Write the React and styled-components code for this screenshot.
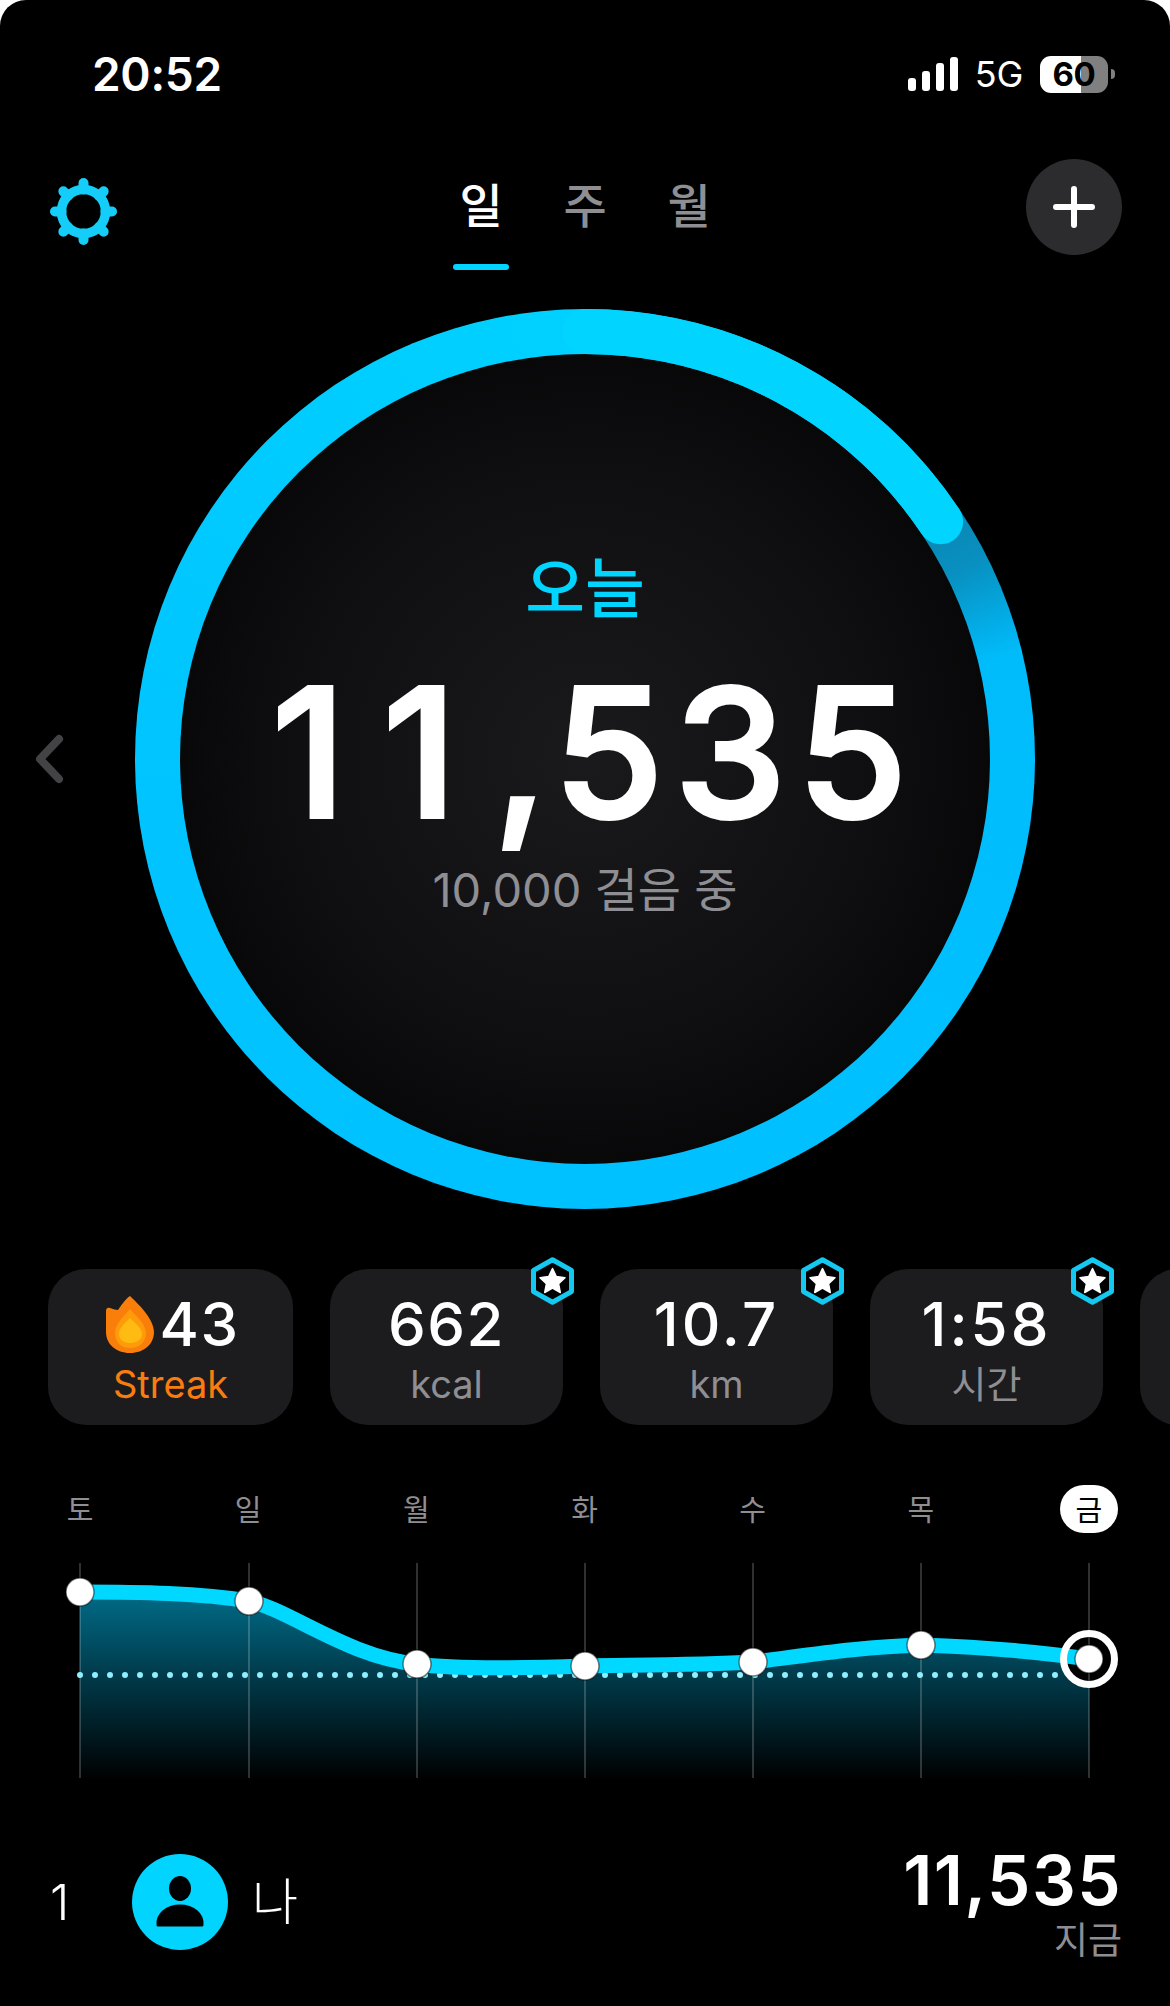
import React from 'react';
import styled, { createGlobalStyle } from 'styled-components';

const Global = createGlobalStyle`
  html, body { margin: 0; padding: 0; background: #fff; }
  * { box-sizing: border-box; }
`;

const SANS = `Inter, "Noto Sans CJK KR", "Noto Sans", sans-serif`;
const CYAN = '#00d4ff';
const GREY = '#8e8e93';

const Screen = styled.div`
  width: 1170px; height: 2006px; background: #000; color: #fff;
  border-radius: 26px 26px 0 0; overflow: hidden;
  font-family: ${SANS}; display: flex; flex-direction: column;
`;
const StatusBar = styled.div`
  height: 148px; flex: none; display: flex; align-items: center; justify-content: space-between;
  padding: 0 55px 0 92px;
`;
const Time = styled.div`font-size: 46px; font-weight: 600; line-height: 50px; letter-spacing: -0.3px;`;
const StatusRight = styled.div`display: flex; align-items: center;`;
const Signal = styled.div`display: flex; align-items: flex-end; gap: 6px; height: 34px; margin-right: 17px;`;
const SignalBar = styled.span`width: 8px; height: ${p => p.$h}px; border-radius: 3px; background: #fff;`;
const Network = styled.div`font-size: 36px; font-weight: 400; line-height: 38px; margin-right: 17px; letter-spacing: -0.3px;`;
const Battery = styled.div`
  width: 68px; height: 37px; border-radius: 11px; color: #000; font-size: 33px; font-weight: 700;
  background: linear-gradient(90deg, #fff 0 41px, #808080 41px 100%);
  display: flex; align-items: center; justify-content: center; line-height: 37px; letter-spacing: -0.3px;
`;
const BatteryNub = styled.span`
  width: 4px; height: 10px; margin-left: 3px; background: #808080; border-radius: 0 5px 5px 0;
`;

const Header = styled.div`
  flex: none; margin-top: 11px; padding: 0 48px; display: grid; grid-template-columns: 1fr auto 1fr;
  align-items: start;
`;
const GearBtn = styled.div`margin: 19px 0 0 2px; width: 67px; height: 67px;`;
const Tabs = styled.div`display: flex;`;
const Tab = styled.div`
  width: 104px; display: flex; flex-direction: column; align-items: center; padding-top: 15px;
`;
const TabLabel = styled.div`
  font-size: 47px; line-height: 64px; font-weight: 500; color: ${p => (p.$active ? '#fff' : GREY)};
`;
const TabBar = styled.div`
  width: 56px; height: 6px; margin-top: 26px; border-radius: 3px; background: ${p => (p.$active ? CYAN : 'transparent')};
`;
const AddBtn = styled.div`
  justify-self: end; width: 96px; height: 96px; border-radius: 50%; background: #2c2c2e;
  display: flex; align-items: center; justify-content: center;
`;

const RingArea = styled.div`position: relative; flex: none; margin-top: 39px; display: flex; justify-content: center;`;
const Chevron = styled.svg`position: absolute; left: 30px; top: 425px;`;
const Ring = styled.div`
  position: relative; width: 900px; height: 900px; border-radius: 50%; padding: 45px; display: flex;
  background: conic-gradient(from 56.3deg, #0a88b4 0deg, #0890c0 7deg, #04a8e0 14deg, #00bcfb 20deg, #00bfff 60deg, #00c4ff 210deg, #00d0ff 290deg, #00d4ff 360deg);
`;
const RingCap = styled.svg`position: absolute; left: 0; top: 0; pointer-events: none;`;
const Disc = styled.div`
  position: relative; flex: 1; border-radius: 50%;
  background: radial-gradient(circle, #1a1a1c 0%, #0f0f11 50%, #040405 82%, #000 100%);
  display: flex; flex-direction: column; align-items: center; padding-top: 200px;
`;
const TodayLabel = styled.div`font-size: 65px; line-height: 70px; font-weight: 500; color: ${CYAN};`;
const BigNumber = styled.div`
  margin-top: 34px; padding-left: 20px; font-size: 178px; line-height: 190px; font-weight: 500; white-space: pre;
  -webkit-text-stroke: 4px #fff;
`;
const BigPart = styled.span`letter-spacing: ${p => p.$ls}px;`;
const GoalText = styled.div`margin-top: 7px; font-size: 47px; line-height: 70px; font-weight: 400; color: ${GREY};`;

const Cards = styled.div`flex: none; margin-top: 60px; padding-left: 48px; display: flex; gap: 37px;`;
const Card = styled.div`
  position: relative; flex: none; width: ${p => p.$w}px; height: 156px; border-radius: 38px; background: #1c1c1e;
  display: flex; flex-direction: column; align-items: center; padding-top: 20px;
`;
const CardValueRow = styled.div`display: flex; align-items: center; gap: 6px; padding-left: 4px;`;
const CardValue = styled.div`font-size: 60px; line-height: 70px; font-weight: 500; letter-spacing: ${p => p.$ls || 1.5}px;`;
const CardLabel = styled.div`
  font-size: 38px; line-height: 46px; margin-top: 2px; font-weight: 400; color: ${p => p.$color || GREY};
`;
const BadgeSlot = styled.div`position: absolute; right: -12px; top: -12px; width: 45px; height: 48px;`;

const DayRow = styled.div`
  flex: none; margin-top: 60px; padding: 0 52px 0 51px; display: flex; justify-content: space-between;
`;
const Day = styled.div`
  width: 58px; height: 48px; border-radius: 24px; display: flex; align-items: center; justify-content: center;
  font-size: 29px; font-weight: 400; padding-bottom: 2px;
  color: ${p => (p.$active ? '#000' : GREY)}; background: ${p => (p.$active ? '#fff' : 'transparent')};
`;
const Chart = styled.svg`display: block; flex: none;`;

const RankRow = styled.div`
  flex: none; height: 204px; padding: 0 48px 0 50px; display: flex; align-items: center;
`;
const Rank = styled.div`width: 82px; font-size: 49px; font-weight: 300;`;
const Avatar = styled.div`
  width: 96px; height: 96px; border-radius: 50%; background: ${CYAN}; display: flex; align-items: center; justify-content: center;
`;
const Name = styled.div`margin-left: 24px; font-size: 50px; font-weight: 300; line-height: 60px;`;
const Score = styled.div`margin-left: auto; display: flex; flex-direction: column; align-items: flex-end;`;
const ScoreValue = styled.div`font-size: 69px; line-height: 78px; font-weight: 600; letter-spacing: 1.4px;`;
const ScoreLabel = styled.div`font-size: 37px; line-height: 44px; color: ${GREY}; font-weight: 400;`;

const Gear = () => {
  const teeth = [0, 45, 90, 135, 180, 225, 270, 315];
  return (
    <svg width="67" height="67" viewBox="-33.5 -33.5 67 67">
      {teeth.map(a => (
        <line key={a} x1="0" y1="-22" x2="0" y2="-28.5" stroke="#14cdf8" strokeWidth="10" strokeLinecap="round" transform={`rotate(${a})`} />
      ))}
      <circle r="22" fill="none" stroke="#14cdf8" strokeWidth="9.5" />
    </svg>
  );
};

const Flame = () => (
  <svg width="48" height="57" viewBox="0 0 48 57">
    <path d="M24 0C30 6 48 22 48 36C48 48 38 57 24 57C10 57 0 48 0 36L0 15C0 12 2 11 4 12C7 13 10 14 12 14C15 10 19 3 24 0Z" fill="#f97f0a" />
    <path d="M24 13C30 20 40 28 40 37C40 46 33 52 24 52C15 52 9 46 9 37C9 28 18 20 24 13Z" fill="#ff9a0a" />
    <path d="M24 22C29 27 36 32 36 38C36 44 30 47 24 47C18 47 13 44 13 38C13 32 19 27 24 22Z" fill="#ffbb12" />
  </svg>
);

const StarBadge = () => (
  <svg width="45" height="48" viewBox="0 0 45 48">
    <path d="M22.5 2.8L41.5 13.4V34.6L22.5 45.2L3.5 34.6V13.4Z" fill="#000" stroke="#14c8f0" strokeWidth="5" strokeLinejoin="round" />
    <path d="M22.5 11.5L26.3 19.6L35 20.7L28.6 26.8L30.3 35.5L22.5 31.2L14.7 35.5L16.4 26.8L10 20.7L18.7 19.6Z" fill="#fff" stroke="#fff" strokeWidth="1.5" strokeLinejoin="round" />
  </svg>
);

const days = ['토', '일', '월', '화', '수', '목', '금'];
const pts = [[80, 1592], [249, 1601], [417, 1664], [585, 1666], [753, 1662], [921, 1645], [1089, 1659]];
const xs = [80, 249, 417, 585, 753, 921, 1089];
const curve = 'M80 1592C140 1592 200 1593 249 1601C290 1610 350 1658 417 1664C460 1670 530 1668 585 1666C640 1665 700 1665 753 1662C810 1655 860 1647 921 1645C980 1647 1040 1652 1089 1659';

export default function App() {
  return (
    <Screen>
      <Global />
      <StatusBar>
        <Time>20:52</Time>
        <StatusRight>
          <Signal>
            {[13, 20, 28, 34].map(h => <SignalBar key={h} $h={h} />)}
          </Signal>
          <Network>5G</Network>
          <Battery>60</Battery>
          <BatteryNub />
        </StatusRight>
      </StatusBar>

      <Header>
        <GearBtn><Gear /></GearBtn>
        <Tabs>
          <Tab><TabLabel $active>일</TabLabel><TabBar $active /></Tab>
          <Tab><TabLabel>주</TabLabel><TabBar /></Tab>
          <Tab><TabLabel>월</TabLabel><TabBar /></Tab>
        </Tabs>
        <AddBtn>
          <svg width="42" height="42" viewBox="0 0 42 42">
            <path d="M21 3V39M3 21H39" stroke="#fff" strokeWidth="6" strokeLinecap="round" />
          </svg>
        </AddBtn>
      </Header>

      <RingArea>
        <Chevron width="34" height="50" viewBox="0 0 34 50">
          <path d="M29 5L10 25L29 45" fill="none" stroke="#434345" strokeWidth="8" strokeLinecap="round" strokeLinejoin="round" />
        </Chevron>
        <Ring>
          <Disc>
            <TodayLabel>오늘</TodayLabel>
            <BigNumber><BigPart $ls={37}>11</BigPart><BigPart $ls={6}>,</BigPart><BigPart $ls={11}>535</BigPart></BigNumber>
            <GoalText>10,000 걸음 중</GoalText>
          </Disc>
          <RingCap width="900" height="900" viewBox="0 0 900 900">
            <path d="M450 22.5A427.5 427.5 0 0 1 805.6 212.8" fill="none" stroke={CYAN} strokeWidth="45" strokeLinecap="round" />
          </RingCap>
        </Ring>
      </RingArea>

      <Cards>
        <Card $w={245}>
          <CardValueRow><Flame /><CardValue>43</CardValue></CardValueRow>
          <CardLabel $color="#f97c10">Streak</CardLabel>
        </Card>
        {[['662', 'kcal', 1.5], ['10.7', 'km', 3], ['1:58', '시간', 3]].map(([v, l, ls]) => (
          <Card $w={233} key={l}>
            <CardValue $ls={ls}>{v}</CardValue>
            <CardLabel>{l}</CardLabel>
            <BadgeSlot><StarBadge /></BadgeSlot>
          </Card>
        ))}
        <Card $w={233} />
      </Cards>

      <DayRow>
        {days.map(d => <Day key={d} $active={d === '금'}>{d}</Day>)}
      </DayRow>

      <Chart width="1170" height="267" viewBox="0 1533 1170 267">
        <defs>
          <linearGradient id="area" gradientUnits="userSpaceOnUse" x1="0" y1="1592" x2="0" y2="1780">
            <stop offset="0" stopColor="#006c88" />
            <stop offset="0.45" stopColor="#003a4a" />
            <stop offset="1" stopColor="#000" />
          </linearGradient>
        </defs>
        <path d={`${curve}V1780H80Z`} fill="url(#area)" />
        {xs.map(x => <rect key={x} x={x - 0.75} y="1563" width="1.5" height="215" fill="#fff" opacity="0.25" />)}
        <line x1="80" y1="1675" x2="1089" y2="1675" stroke="#8ef0ff" strokeWidth="6" strokeDasharray="0 15" strokeLinecap="round" />
        <circle cx="1089" cy="1659" r="25.5" fill="#000" />
        <line x1="1089" y1="1634" x2="1089" y2="1684" stroke="#fff" strokeOpacity="0.25" strokeWidth="1.5" />
        <path d={curve} fill="none" stroke="#00d8ff" strokeWidth="15" />
        <circle cx="1089" cy="1659" r="25.5" fill="none" stroke="#fff" strokeWidth="7" />
        {pts.map(([x, y]) => <circle key={x} cx={x} cy={y} r="14" fill="#fff" stroke="#000" strokeOpacity="0.5" strokeWidth="1.5" />)}
      </Chart>

      <RankRow>
        <Rank>1</Rank>
        <Avatar>
          <svg width="50" height="52" viewBox="0 0 50 52">
            <ellipse cx="25" cy="12.5" rx="11" ry="12.5" fill="#000" />
            <path d="M3 49C2 38 12 30 25 30C38 30 48 38 47 49Z" fill="#000" stroke="#000" strokeWidth="3" strokeLinejoin="round" />
          </svg>
        </Avatar>
        <Name>나</Name>
        <Score>
          <ScoreValue>11,535</ScoreValue>
          <ScoreLabel>지금</ScoreLabel>
        </Score>
      </RankRow>
    </Screen>
  );
}
